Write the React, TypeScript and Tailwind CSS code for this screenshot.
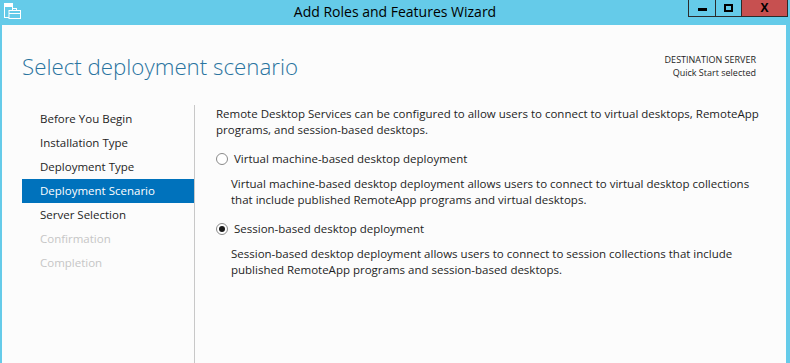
import React from "react";

const steps = [
  { label: "Before You Begin", state: "done" },
  { label: "Installation Type", state: "done" },
  { label: "Deployment Type", state: "done" },
  { label: "Deployment Scenario", state: "active" },
  { label: "Server Selection", state: "done" },
  { label: "Confirmation", state: "disabled" },
  { label: "Completion", state: "disabled" },
];

function AppIcon() {
  return (
    <svg width="17" height="16" viewBox="0 0 17 16" className="block">
      <rect x="0.5" y="0.5" width="8" height="14" fill="#65cbe9" stroke="#fff" />
      <rect x="1" y="1" width="7" height="3" fill="#fff" />
      <rect x="5" y="7.5" width="11.5" height="8" fill="#65cbe9" stroke="#fff" />
      <rect x="8.5" y="5.5" width="4" height="2" fill="none" stroke="#fff" />
      <line x1="5" y1="10.5" x2="16.5" y2="10.5" stroke="#fff" />
    </svg>
  );
}

function Radio({ checked }: { checked: boolean }) {
  return (
    <span className="flex h-[12px] w-[12px] items-center justify-center rounded-full border border-[#8a8a8a] bg-white">
      {checked && <span className="h-[6px] w-[6px] rounded-full bg-[#1a1a1a]" />}
    </span>
  );
}

function Option({
  checked,
  title,
  lines,
}: {
  checked: boolean;
  title: string;
  lines: string[];
}) {
  return (
    <div>
      <div className="flex h-[16px] items-center gap-[6px]">
        <Radio checked={checked} />
        <span>{title}</span>
      </div>
      <div className="mt-[9px] pl-[15px]">
        {lines.map((l) => (
          <div key={l} className="h-[16px]">
            {l}
          </div>
        ))}
      </div>
    </div>
  );
}

export default function App() {
  return (
    <div
      className="flex h-[363px] w-[790px] flex-col overflow-hidden bg-[#65cbe9] text-[11.5px] leading-[16px] text-[#1e1e1e]"
      style={{ fontFamily: '"Segoe UI", "Open Sans", "Noto Sans", sans-serif' }}
    >
      {/* title bar */}
      <div className="relative flex h-[25px] shrink-0 items-start">
        <div className="pl-[4px] pt-[3px]">
          <AppIcon />
        </div>
        <div className="absolute left-0 right-0 top-[2px] text-center text-[14px] leading-[20px] text-black">
          Add Roles and Features Wizard
        </div>
        <div className="absolute right-[2px] top-0 flex h-[17px] border border-t-0 border-[#2b2b2b]">
          <div className="flex w-[27px] items-center justify-center border-r border-[#2b2b2b]">
            <span className="mt-[2px] h-[3px] w-[9px] bg-black" />
          </div>
          <div className="flex w-[26px] items-center justify-center border-r border-[#2b2b2b]">
            <span className="h-[8px] w-[9px] border-2 border-black" />
          </div>
          <div className="flex w-[45px] items-center justify-center bg-[#c75050] text-[12px] font-bold leading-none text-black">
            X
          </div>
        </div>
      </div>

      {/* body */}
      <div className="ml-[2px] mr-[4px] flex flex-1 flex-col bg-[#fcfcfc]">
        <div className="flex items-start justify-between pl-[20px] pr-[30px] pt-[26px]">
          <h1 className="text-[22.3px] font-light leading-[32px] text-[#2a74a0]">
            Select deployment scenario
          </h1>
          <div className="pt-[2px] text-right text-[9px] leading-[13px] text-[#1e1e1e]">
            <div>DESTINATION SERVER</div>
            <div>Quick Start selected</div>
          </div>
        </div>

        <div className="mt-[22px] flex flex-1">
          <div className="w-[192px] pl-[20px] pt-[2px]">
            {steps.map((s) => (
              <div
                key={s.label}
                className={
                  s.state === "active"
                    ? "h-[24px] bg-[#0072bc] pl-[18px] leading-[24px] text-white"
                    : s.state === "disabled"
                      ? "h-[24px] pl-[18px] leading-[24px] text-[#c6c6c6]"
                      : "h-[24px] pl-[18px] leading-[24px] text-[#1e1e1e]"
                }
              >
                {s.label}
              </div>
            ))}
          </div>
          <div className="w-[1px] bg-[#c8c8c8]" />
          <div className="flex flex-col gap-[13px] pl-[21px] pt-[1px]">
            <div>
              <div>
                Remote Desktop Services can be configured to allow users to connect to virtual desktops, RemoteApp
              </div>
              <div>programs, and session-based desktops.</div>
            </div>
            <Option
              checked={false}
              title="Virtual machine-based desktop deployment"
              lines={[
                "Virtual machine-based desktop deployment allows users to connect to virtual desktop collections",
                "that include published RemoteApp programs and virtual desktops.",
              ]}
            />
            <Option
              checked={true}
              title="Session-based desktop deployment"
              lines={[
                "Session-based desktop deployment allows users to connect to session collections that include",
                "published RemoteApp programs and session-based desktops.",
              ]}
            />
          </div>
        </div>
      </div>
    </div>
  );
}
